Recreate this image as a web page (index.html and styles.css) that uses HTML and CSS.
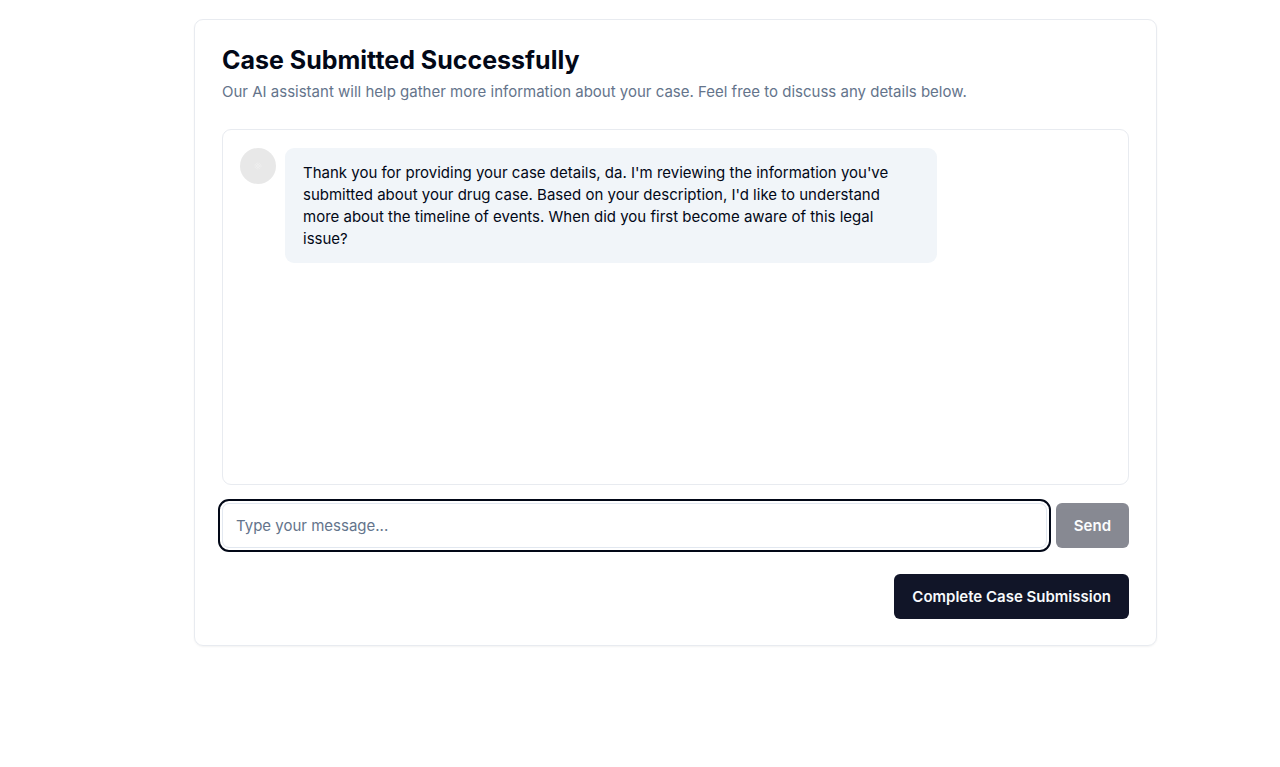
FILE: index.html
```html
<!DOCTYPE html>
<html lang="en">
<head>
<meta charset="utf-8">
<meta name="viewport" content="width=device-width, initial-scale=1">
<title>Case Submitted</title>
<link rel="stylesheet" href="styles.css">
</head>
<body>
<main class="page">
  <section class="card">
    <header class="card-header">
      <h1 class="title">Case Submitted Successfully</h1>
      <p class="subtitle">Our AI assistant will help gather more information about your case. Feel free to discuss any details below.</p>
    </header>
    <div class="messages">
      <div class="message">
        <span class="avatar">
          <svg width="8" height="8" viewBox="0 0 8 8" fill="none" stroke="#f1f1f1" aria-hidden="true">
            <circle cx="4" cy="4" r="3" stroke-width="1" stroke-dasharray="1.4 1"/>
            <circle cx="4" cy="4" r="1.4" stroke-width="1"/>
          </svg>
        </span>
        <p class="bubble">Thank you for providing your case details, da. I'm reviewing the information you've submitted about your drug case. Based on your description, I'd like to understand more about the timeline of events. When did you first become aware of this legal issue?</p>
      </div>
    </div>
    <form class="composer">
      <input class="field" type="text" placeholder="Type your message..." aria-label="Message">
      <button class="button send" type="submit" disabled>Send</button>
    </form>
    <div class="actions">
      <button class="button" type="button">Complete Case Submission</button>
    </div>
  </section>
</main>
</body>
</html>
```
FILE: styles.css
```css
* {
  box-sizing: border-box;
}

body {
  margin: 0;
  background: #fff;
  color: #020817;
  font: 15px/22px Inter, "Liberation Sans", sans-serif;
}

.page {
  padding: 19px 123px 19px 194px;
}

.card {
  padding: 27px 27px 26px;
  border: 1px solid #e8ebf0;
  border-radius: 9px;
  box-shadow: 0 1px 2px rgb(0 0 0 / 5%);
}

.title {
  margin: 0;
  font-size: 25px;
  line-height: 27px;
  font-weight: 700;
}

.subtitle {
  margin: 7px 0 0;
  color: #64748b;
}

.messages {
  height: 356px;
  margin-top: 26px;
  padding: 18px 17px;
  border: 1px solid #e8ebf0;
  border-radius: 9px;
}

.message {
  display: flex;
  align-items: flex-start;
  gap: 9px;
  max-width: 80%;
}

.avatar {
  display: flex;
  flex: none;
  align-items: center;
  justify-content: center;
  width: 36px;
  height: 36px;
  border-radius: 50%;
  background: #e8e8e8;
}

.bubble {
  margin: 0;
  padding: 14px 18px 13px;
  border-radius: 9px;
  background: #f1f5f9;
}

.composer {
  display: flex;
  gap: 9px;
  margin-top: 18px;
}

.field {
  flex: 1;
  min-width: 0;
  height: 45px;
  padding: 0 13px;
  border: 1px solid #e2e8f0;
  border-radius: 7px;
  outline: 2px solid #020817;
  outline-offset: 2px;
  font: inherit;
}

.field::placeholder {
  color: #64748b;
  opacity: 1;
}

.button {
  height: 45px;
  padding: 0 18px;
  border: 0;
  border-radius: 6px;
  background: #111528;
  color: #f8fafc;
  font: inherit;
  font-weight: 600;
}

.send:disabled {
  opacity: 0.5;
}

.actions {
  display: flex;
  justify-content: flex-end;
  margin-top: 26px;
}
```
